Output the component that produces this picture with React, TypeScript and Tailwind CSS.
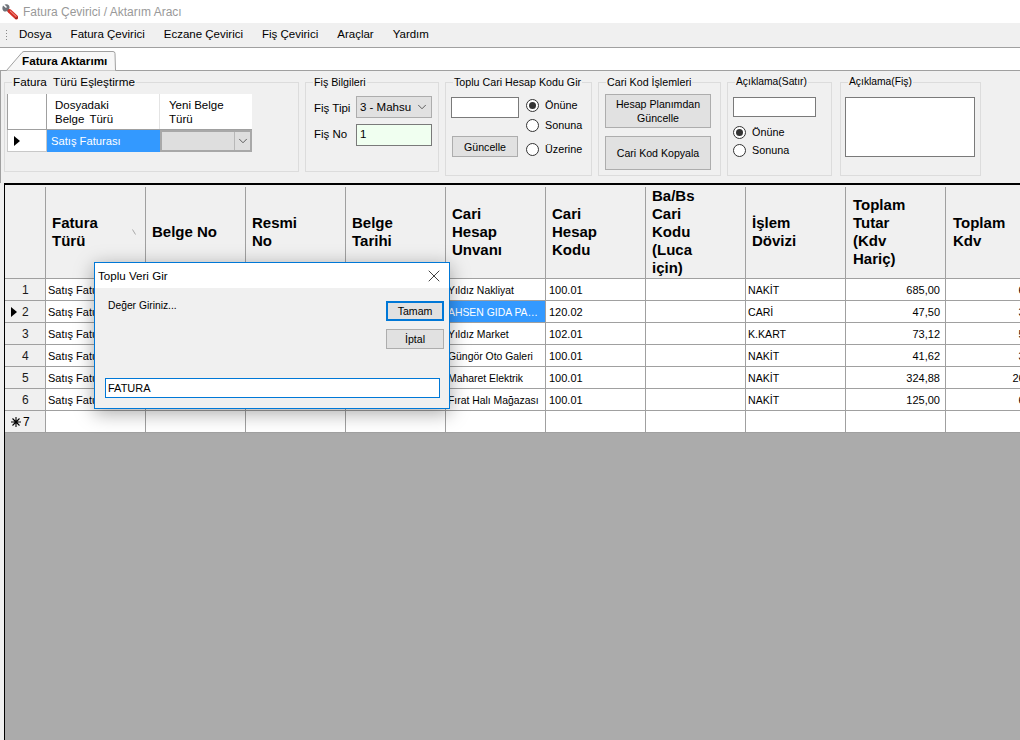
import { ChevronDown, X } from "lucide-react";

const font = { fontFamily: '"Liberation Sans", Arial, sans-serif' };

const menuItems = ["Dosya", "Fatura Çevirici", "Eczane Çevirici", "Fiş Çevirici", "Araçlar", "Yardım"];

const columns = [
  { lines: ["Fatura", "Türü"] },
  { lines: ["Belge No"] },
  { lines: ["Resmi", "No"] },
  { lines: ["Belge", "Tarihi"] },
  { lines: ["Cari", "Hesap", "Unvanı"] },
  { lines: ["Cari", "Hesap", "Kodu"] },
  { lines: ["Ba/Bs", "Cari", "Kodu", "(Luca", "için)"] },
  { lines: ["İşlem", "Dövizi"] },
  { lines: ["Toplam", "Tutar", "(Kdv", "Hariç)"] },
  { lines: ["Toplam", "Kdv"] },
];

const rows = [
  ["Yıldız Nakliyat", "100.01", "NAKİT", "685,00", "6,85"],
  ["AHSEN GIDA PAZARLAMA", "120.02", "CARİ", "47,50", "3,80"],
  ["Yıldız Market", "102.01", "K.KART", "73,12", "5,85"],
  ["Güngör Oto Galeri", "100.01", "NAKİT", "41,62", "3,33"],
  ["Maharet Elektrik", "100.01", "NAKİT", "324,88", "26,00"],
  ["Fırat Halı Mağazası", "100.01", "NAKİT", "125,00", "6,25"],
];

function Group({ title, className, children }: { title: string; className: string; children: React.ReactNode }) {
  return (
    <fieldset className={`shrink-0 border border-[#dcdcdc] ${className}`}>
      <legend className="ml-[7px] whitespace-nowrap px-[1px] text-[10.7px] leading-[14px] text-black">{title}</legend>
      {children}
    </fieldset>
  );
}

function Radio({ label, checked, className = "" }: { label: string; checked?: boolean; className?: string }) {
  return (
    <div className={`flex items-center gap-[6px] text-[10.8px] leading-[14px] ${className}`}>
      <span className="flex h-[13px] w-[13px] items-center justify-center rounded-full border border-[#333333] bg-white">
        {checked && <span className="h-[7px] w-[7px] rounded-full bg-[#333333]" />}
      </span>
      {label}
    </div>
  );
}

function GrayButton({ className, children }: { className: string; children: React.ReactNode }) {
  return (
    <div className={`flex items-center justify-center border border-[#adadad] bg-[#e1e1e1] text-center text-[10.6px] leading-[14px] ${className}`}>
      {children}
    </div>
  );
}

function ArrowMark({ className = "" }: { className?: string }) {
  return (
    <svg width="6" height="10" viewBox="0 0 6 10" className={className}>
      <path d="M0 0 L6 5 L0 10 Z" fill="#000" />
    </svg>
  );
}

function AppIcon() {
  return (
    <svg width="16" height="16" viewBox="0 0 16 16" className="mt-[1px]">
      <path d="M1 1.5 L4 4 L5 3 L2.5 0.5 Q5.5 -0.5 7 1.5 Q8 3.5 7 5 L9 7 L7 9 L5 7 Q3 8 1.5 7 Q-0.5 5 1 1.5 Z" fill="#6f737a" />
      <path d="M7.5 7 L14.5 13.5" stroke="#d62f26" strokeWidth="4" strokeLinecap="round" />
      <path d="M8 6.8 L14.5 12.8" stroke="#f5a59c" strokeWidth="1" />
      <path d="M13.5 15 L15.3 13.2" stroke="#5b2020" strokeWidth="1" />
    </svg>
  );
}

function SortMark() {
  return (
    <svg width="4" height="6" viewBox="0 0 4 6" className="absolute left-[86px] top-[42px]">
      <path d="M0.5 0.5 L3.5 5.5" stroke="#a8a8a8" strokeWidth="1" />
    </svg>
  );
}

function NewRowMark() {
  return (
    <svg width="10" height="10" viewBox="0 0 10 10">
      <path d="M5 0 V10 M0 5 H10 M1.5 1.5 L8.5 8.5 M8.5 1.5 L1.5 8.5" stroke="#000" strokeWidth="1.1" />
    </svg>
  );
}

function MatchTable() {
  return (
    <div className="ml-[2px] mt-[5px] w-[245px] text-[11.5px] leading-[14px]">
      <div className="flex h-[35px] bg-white">
        <div className="w-[40px] border-l border-r border-[#a0a0a0]" />
        <div className="w-[113px] border-r border-[#e4e4e4] pl-[8px] pt-[4px]">
          Dosyadaki
          <br />
          <span className="[word-spacing:2px]">Belge Türü</span>
        </div>
        <div className="pl-[9px] pt-[4px]">
          Yeni Belge
          <br />
          Türü
        </div>
      </div>
      <div className="flex h-[23px] border-t border-[#a0a0a0]">
        <div className="flex w-[40px] items-center border-b border-l border-r border-[#c8c8c8] bg-white pl-[6px]">
          <ArrowMark />
        </div>
        <div className="flex w-[113px] items-center bg-[#3399ff] pl-[4px] text-[11.2px] text-white">Satış Faturası</div>
        <div className="flex w-[92px] border-2 border-[#a8a8a8] bg-[#dedede]">
          <div className="flex-1" />
          <div className="flex w-[16px] items-center justify-center border-l border-[#b8b8b8]">
            <ChevronDown size={14} strokeWidth={1.3} color="#333" />
          </div>
        </div>
      </div>
    </div>
  );
}

function Toolbar() {
  return (
    <div className="flex h-[112px] shrink-0 items-start border-l border-[#a0a0a0] bg-[#f0f0f0] pl-[3px] pt-[4px]">
      <Group title="Fatura  Türü Eşleştirme" className="h-[97px] w-[295px] [&>legend]:whitespace-pre [&>legend]:text-[11.7px]">
        <MatchTable />
      </Group>

      <Group title="Fiş Bilgileri" className="ml-[6px] h-[97px] w-[134px]">
        <div className="flex flex-col gap-[6px] pl-[8px] pt-[7px] text-[11.5px]">
          <div className="flex items-center">
            <span className="w-[42px] pt-[3px]">Fiş Tipi</span>
            <div className="flex h-[22px] w-[76px] items-center justify-between border border-[#adadad] bg-[#e1e1e1] pl-[3px] pr-[2px]">
              <span className="pt-[1px]">3 - Mahsu</span>
              <ChevronDown size={14} strokeWidth={1.3} color="#333" />
            </div>
          </div>
          <div className="flex items-center">
            <span className="w-[42px]">Fiş No</span>
            <div className="flex h-[22px] w-[76px] items-center border border-[#7a7a7a] bg-[#f0fff0] pl-[3px]">1</div>
          </div>
        </div>
      </Group>

      <Group title="Toplu Cari Hesap Kodu Gir" className="ml-[6px] h-[101px] w-[147px]">
        <div className="flex pl-[5px] pt-[8px]">
          <div className="w-[75px]">
            <div className="h-[21px] w-[68px] border border-[#7a7a7a] bg-white" />
            <GrayButton className="ml-[1px] mt-[18px] h-[21px] w-[66px]">Güncelle</GrayButton>
          </div>
          <div className="pt-[1px]">
            <Radio label="Önüne" checked />
            <Radio label="Sonuna" className="mt-[6px]" />
            <Radio label="Üzerine" className="mt-[10px]" />
          </div>
        </div>
      </Group>

      <Group title="Cari Kod İşlemleri" className="ml-[6px] h-[101px] w-[123px]">
        <div className="flex flex-col gap-[8px] pl-[6px] pt-[5px]">
          <GrayButton className="h-[34px] w-[106px]">
            Hesap Planımdan
            <br />
            Güncelle
          </GrayButton>
          <GrayButton className="h-[34px] w-[106px]">Cari Kod Kopyala</GrayButton>
        </div>
      </Group>

      <Group title="Açıklama(Satır)" className="ml-[6px] h-[101px] w-[105px] [&>legend]:text-[10.3px]">
        <div className="pl-[5px] pt-[8px]">
          <div className="h-[20px] w-[83px] border border-[#7a7a7a] bg-white" />
          <Radio label="Önüne" checked className="mt-[8px]" />
          <Radio label="Sonuna" className="mt-[4px]" />
        </div>
      </Group>

      <Group title="Açıklama(Fiş)" className="ml-[8px] h-[101px] w-[141px] [&>legend]:text-[10.3px]">
        <div className="pl-[4px] pt-[8px]">
          <div className="h-[60px] w-[130px] border border-[#7a7a7a] bg-white" />
        </div>
      </Group>
    </div>
  );
}

function DataGrid() {
  return (
    <div className="min-h-0 flex-1 overflow-hidden border-l border-[#f0f0f0] bg-[#f0f0f0] pl-[3px]">
      <div className="h-full overflow-hidden border-l-[1px] border-t-[2px] border-black bg-[#ababab]">
        <div className="w-[1041px]">
          <div className="flex h-[94px] border-b border-[#a0a0a0] bg-[#f0f0f0] pt-[2px]">
            <div className="w-[41px] border-r border-[#a0a0a0]" />
            {columns.map((col, i) => (
              <div
                key={i}
                className={`relative flex w-[100px] flex-col justify-center border-r border-[#a0a0a0] pb-[2px] text-[15px] font-bold leading-[18px] text-black ${i >= 8 ? "pl-[7px]" : "pl-[6px]"}`}
              >
                {col.lines.map((line) => (
                  <span key={line}>{line}</span>
                ))}
                {i === 0 && <SortMark />}
              </div>
            ))}
          </div>

          {rows.map((row, i) => (
            <div key={i} className="flex h-[22px] border-b border-[#a0a0a0] bg-white text-[11px] leading-[22px] text-black">
              <div className="relative w-[41px] border-r border-[#a0a0a0] bg-[#f0f0f0] pl-[17px] text-[12px] text-[#1a1a1a]">
                {i === 1 && <ArrowMark className="absolute left-[6px] top-[6px]" />}
                <span className="block w-[8px]">{i + 1}</span>
              </div>
              <div className="w-[100px] whitespace-nowrap border-r border-[#a0a0a0] pl-[2px]">Satış Faturası</div>
              <div className="w-[100px] border-r border-[#a0a0a0]" />
              <div className="w-[100px] border-r border-[#a0a0a0]" />
              <div className="w-[100px] border-r border-[#a0a0a0]" />
              <div className={`w-[100px] truncate border-r border-[#a0a0a0] pl-[2px] pr-[4px] text-[10.4px] leading-[23px] ${i === 1 ? "bg-[#3399ff] text-white" : ""}`}>
                {row[0]}
              </div>
              <div className="w-[100px] border-r border-[#a0a0a0] pl-[3px]">{row[1]}</div>
              <div className="w-[100px] border-r border-[#a0a0a0]" />
              <div className="w-[100px] border-r border-[#a0a0a0] pl-[2px] text-[10.6px]">{row[2]}</div>
              <div className="w-[100px] border-r border-[#a0a0a0] pr-[5px] text-right">{row[3]}</div>
              <div className="w-[100px] border-r border-[#a0a0a0] pr-[5px] text-right">{row[4]}</div>
            </div>
          ))}

          <div className="flex h-[22px] border-b border-[#a0a0a0] bg-white text-[12px] leading-[22px]">
            <div className="flex w-[41px] items-center gap-[2px] border-r border-[#a0a0a0] bg-[#f0f0f0] pl-[6px]">
              <NewRowMark />
              7
            </div>
            {columns.map((_, i) => (
              <div key={i} className="w-[100px] border-r border-[#a0a0a0]" />
            ))}
          </div>
        </div>
      </div>
    </div>
  );
}

function BulkDialog() {
  return (
    <div className="absolute left-[94px] top-[262px] flex h-[147px] w-[356px] flex-col border border-[#0078d7] bg-[#f0f0f0] text-[11.6px] text-black shadow-[0_4px_18px_rgba(0,0,0,0.35)]">
      <div className="flex h-[25px] shrink-0 items-center justify-between bg-white pl-[3px] pr-[5px]">
        <span>Toplu Veri Gir</span>
        <X size={20} strokeWidth={0.9} color="#000" />
      </div>
      <div className="flex justify-between pl-[13px] pr-[5px] pt-[11px]">
        <span className="text-[10.3px] leading-[14px]">Değer Giriniz...</span>
        <div className="flex flex-col gap-[8px] pt-[2px]">
          <GrayButton className="h-[20px] w-[58px] !border-2 !border-[#0078d7]">Tamam</GrayButton>
          <GrayButton className="h-[20px] w-[58px]">İptal</GrayButton>
        </div>
      </div>
      <div className="ml-[10px] mt-[29px] flex h-[20px] w-[335px] items-center border border-[#0078d7] bg-white pl-[2px] text-[11px]">FATURA</div>
    </div>
  );
}

export default function App() {
  return (
    <div className="relative flex h-[740px] w-[1020px] flex-col overflow-hidden bg-white" style={font}>
      <div className="flex h-[23px] shrink-0 items-center bg-white pl-[2px] text-[12px] text-[#999999]">
        <AppIcon />
        <span className="ml-[5px]">Fatura Çevirici / Aktarım Aracı</span>
      </div>

      <div className="flex h-[25px] shrink-0 items-center border-b border-[#a0a0a0] bg-[#f0f0f0] pl-[6px] text-[11.5px] text-black">
        <span className="mr-[12px] flex flex-col gap-[2px]">
          <span className="h-[1px] w-[1px] bg-[#888888]" />
          <span className="h-[1px] w-[1px] bg-[#888888]" />
          <span className="h-[1px] w-[1px] bg-[#888888]" />
          <span className="h-[1px] w-[1px] bg-[#888888]" />
        </span>
        <div className="flex gap-[19px]">
          {menuItems.map((item) => (
            <span key={item}>{item}</span>
          ))}
        </div>
      </div>

      <div className="flex h-[23px] shrink-0 items-end border-b border-[#a0a0a0] bg-white pl-[6px]">
        <div className="relative flex h-[19px] w-[110px] items-center pl-[16px] text-[11.7px] font-bold text-black">
          <svg width="110" height="20" viewBox="0 0 110 20" className="absolute left-0 top-0">
            <path d="M0.5 19.5 L16 1.5 Q17 0.5 18 0.5 L107 0.5 Q109 0.5 109 2.5 L109.5 19.5" fill="#f7f7f7" stroke="#a0a0a0" />
          </svg>
          <span className="relative">Fatura Aktarımı</span>
        </div>
      </div>

      <Toolbar />
      <DataGrid />
      <BulkDialog />
    </div>
  );
}
